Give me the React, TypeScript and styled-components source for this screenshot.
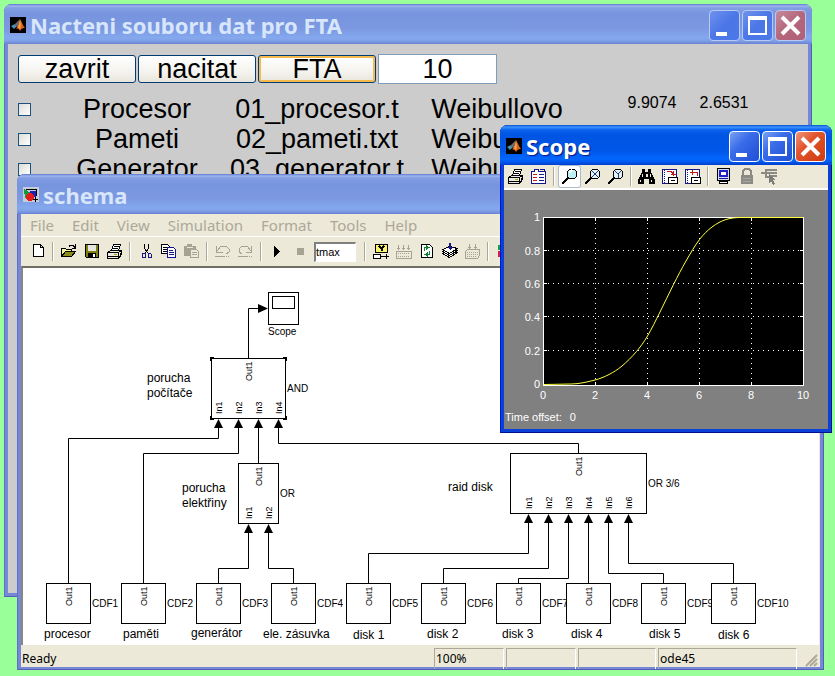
import React from "react";
import styled, { createGlobalStyle, css } from "styled-components";

const GlobalStyle = createGlobalStyle`
  *, *::before, *::after { box-sizing: border-box; }
  body { margin: 0; }
`;

const uiFont = `"Noto Sans", Tahoma, sans-serif`;
const plainFont = `"Liberation Sans", Arial, sans-serif`;

/* ---------- desktop and window frames ---------- */

const Desktop = styled.main`
  position: relative;
  height: 100vh;
  overflow: hidden;
  background: #99ff99;
  font-family: ${plainFont};
  color: #000;
`;

const Frame = styled.section<{ $active?: boolean }>`
  position: absolute;
  display: flex;
  flex-direction: column;
  overflow: hidden;
  border-radius: 8px 8px 0 0;
  padding: 0 4px 4px;
  background: ${(p) => (p.$active ? "#0a3fd8" : "#7687d8")};
  box-shadow: inset 1px 0 ${(p) => (p.$active ? "#0019cf" : "#5f6fc6")},
    inset -1px -1px ${(p) => (p.$active ? "#00138c" : "#5560b4")};
`;

const FtaFrame = styled(Frame)`
  inset: 4px 23px 79px 4px;
`;
const SchemaFrame = styled(Frame)`
  inset: 174px 11px 6px 17px;
  padding-bottom: 3px;
`;
const ScopeFrame = styled(Frame)`
  top: 125px;
  right: 3px;
  width: 332px;
`;

const TitleBar = styled.header<{ $active?: boolean }>`
  flex: none;
  display: flex;
  align-items: center;
  gap: 4px;
  height: 40px;
  margin: 0 -4px;
  padding: 2px 6px 0;
  background: ${(p) =>
    p.$active
      ? "linear-gradient(#0a4fc8 0, #3b92ff 2px, #0a62ee 5px, #0054e3 10px, #0057e8 26px, #0367ff 34px, #0258ee 37px, #003dcc 40px)"
      : "linear-gradient(#5e77c8 0, #9db5f0 2px, #829de4 4px, #7794de 10px, #7b98e1 24px, #84a8ee 34px, #7f9fe6 37px, #6a80d2 40px)"};
`;

const TitleText = styled.h1<{ $active?: boolean }>`
  flex: 1;
  margin: 0;
  overflow: hidden;
  white-space: nowrap;
  font: 700 22px/26px ${uiFont};
  color: ${(p) => (p.$active ? "#fff" : "#d8e6fb")};
  ${(p) => p.$active && css`text-shadow: 1px 1px 1px #0a1883;`}
`;

const CaptionGroup = styled.div`
  display: flex;
  gap: 2px;
`;

const CaptionButton = styled.button<{ $close?: boolean; $active?: boolean }>`
  width: 31px;
  height: 31px;
  padding: 0;
  border: 1px solid ${(p) => (p.$active ? "#fff" : "#b9cbf5")};
  border-radius: 4px;
  background: ${(p) =>
    p.$close
      ? p.$active
        ? "linear-gradient(135deg, #f0957a, #e2542c 40%, #cc3a10)"
        : "linear-gradient(135deg, #c58a9c, #b4667a 50%, #b06078)"
      : p.$active
        ? "linear-gradient(135deg, #7aa2f6, #3a6be8 40%, #1f4fd4)"
        : "linear-gradient(135deg, #6f92ee, #4b76e6 50%, #4c78ea)"};
  svg { display: block; }
`;

function Captions({ active }: { active?: boolean }) {
  return (
    <CaptionGroup>
      <CaptionButton $active={active} aria-label="Minimize">
        <svg width="29" height="29"><path d="M6 21h11v4H6z" fill="#fff" /></svg>
      </CaptionButton>
      <CaptionButton $active={active} aria-label="Maximize">
        <svg width="29" height="29"><path fillRule="evenodd" d="M5 5h19v19H5zM7 9v13h15V9z" fill="#fff" /></svg>
      </CaptionButton>
      <CaptionButton $active={active} $close aria-label="Close">
        <svg width="29" height="29"><path d="M6 6L23 23M23 6L6 23" stroke="#fff" strokeWidth="4" /></svg>
      </CaptionButton>
    </CaptionGroup>
  );
}

function MatlabIcon() {
  return (
    <svg width="16" height="16" viewBox="0 0 16 16">
      <path d="M0 0h16v16H0z" fill="#000" />
      <path d="M1 9l4-2 2 2-3 3z" fill="#4c8fb0" />
      <path d="M5 7l4-4 1-1-2 8-2-1z" fill="#6a6a78" />
      <path d="M10 2c2 3 3 7 5 9-2 0-3 0-5 3-1-2-2-3-4-2 2-3 3-6 4-10z" fill="#e0621c" />
      <path d="M10 3c1 3 1 6 0 9-1-1-1-1-2-1z" fill="#f6a648" />
    </svg>
  );
}

function ModelIcon() {
  return (
    <svg width="16" height="16" viewBox="0 0 16 16" shapeRendering="crispEdges">
      <path d="M0 0h16v15H0z" fill="#c4ccdc" />
      <path d="M2.500 2.500h11v6" fill="none" stroke="#000" />
      <path d="M1 2l7 4-6 5z" fill="#129a3c" />
      <path d="M7 4h6v6H7z" fill="#2020b0" />
      <circle cx="7" cy="10" r="4" fill="#e01c1c" />
      <path d="M10 12.500h5M12.500 10v5" stroke="#000" />
    </svg>
  );
}

/* ---------- FTA window ---------- */

const FtaBody = styled.div`
  flex: 1;
  overflow: hidden;
  padding: 10px;
  background: #ccc;
  font-size: 27px;
  line-height: 30px;
`;

const ButtonRow = styled.div`
  display: flex;
  align-items: center;
  gap: 2px;
  height: 30px;
  margin-bottom: 10px;
`;

const PushButton = styled.button<{ $focus?: boolean }>`
  width: 118px;
  height: 28px;
  padding: 0;
  border: 1px solid #003c74;
  border-radius: 3px;
  background: linear-gradient(#fff, #f4f3ee 60%, #e8e5dc);
  font: 27px/26px ${plainFont};
  color: #000;
  ${(p) => p.$focus && css`box-shadow: inset 0 0 0 2px #f5b94c;`}
`;

const HorizonInput = styled.input`
  width: 119px;
  height: 30px;
  padding: 0;
  border: 1px solid #7f9db9;
  background: #fff;
  font: 27px/28px ${plainFont};
  text-align: center;
  color: #000;
`;

const PartRow = styled.div`
  display: grid;
  grid-template-columns: 29px repeat(3, 180px) auto;
  align-items: center;
  justify-content: start;
  height: 30px;
  text-align: center;
  white-space: nowrap;
`;

const Tick = styled.input`
  appearance: none;
  width: 13px;
  height: 13px;
  margin: 0;
  border: 1px solid #1c5180;
  background: linear-gradient(135deg, #dcdcd7, #fff);
`;

const Params = styled.div`
  display: flex;
  align-self: start;
  padding-left: 29px;
  font-size: 16px;
  line-height: 18px;
`;

const Param = styled.span`
  width: 72px;
`;

const parts = [
  { name: "Procesor", file: "01_procesor.t", dist: "Weibullovo", params: ["9.9074", "2.6531"] },
  { name: "Pameti", file: "02_pameti.txt", dist: "Weibullovo", params: [] },
  { name: "Generator", file: "03_generator.t", dist: "Weibullovo", params: [] },
];

function FtaWindow() {
  return (
    <FtaFrame>
      <TitleBar>
        <MatlabIcon />
        <TitleText>Nacteni souboru dat pro FTA</TitleText>
        <Captions />
      </TitleBar>
      <FtaBody>
        <ButtonRow>
          <PushButton>zavrit</PushButton>
          <PushButton>nacitat</PushButton>
          <PushButton $focus>FTA</PushButton>
          <HorizonInput aria-label="tmax" defaultValue="10" />
        </ButtonRow>
        {parts.map((p) => (
          <PartRow key={p.name}>
            <Tick type="checkbox" id={p.name} />
            <label htmlFor={p.name}>{p.name}</label>
            <span>{p.file}</span>
            <span>{p.dist}</span>
            <Params>
              {p.params.map((v) => <Param key={v}>{v}</Param>)}
            </Params>
          </PartRow>
        ))}
      </FtaBody>
    </FtaFrame>
  );
}

/* ---------- toolbars ---------- */

const ToolBar = styled.div<{ $tall?: boolean }>`
  flex: none;
  display: flex;
  align-items: center;
  height: ${(p) => (p.$tall ? 29 : 23)}px;
  padding-left: ${(p) => (p.$tall ? 5 : 0)}px;
  overflow: hidden;
  background: #ece9d8;
`;

const ToolButton = styled.button<{ $on?: boolean }>`
  flex: none;
  width: 23px;
  height: 23px;
  padding: 0 3px;
  border: 0;
  border-radius: 3px;
  background: ${(p) => (p.$on ? "#fff" : "transparent")};
  ${(p) => p.$on && css`box-shadow: inset 0 0 0 1px #a9bccb;`}
  svg { display: block; }
`;

const Divider = styled.span`
  flex: none;
  width: 2px;
  height: 19px;
  margin: 0 3px;
  border-left: 1px solid #aca899;
  border-right: 1px solid #fff;
`;

const StopTime = styled.input`
  flex: none;
  width: 42px;
  height: 20px;
  margin: 0 5px 0 3px;
  padding: 0;
  border: 1px solid #fff;
  border-top: 2px solid #808080;
  border-left: 2px solid #808080;
  background: #fff;
  font: 11px/16px ${plainFont};
  color: #000;
`;

const k = "#000";
const g = "#a6a394";
const navy = "#16168c";

const icons: Record<string, React.ReactNode> = {
  New: <path d="M4.500 1.500h7l3 3v9h-10zM11.500 1.500v3h3" fill="#fff" stroke={k} />,
  Open: (
    <>
      <path d="M1.500 13.500v-8h4l1 1h5v3" fill="#f7f39a" stroke={k} />
      <path d="M1.500 13.500l4-5h10l-4 5z" fill="#8c8c1c" stroke={k} />
      <path d="M9 3.500l1-1h3l2 2M15.500 1v4h-4" fill="none" stroke={k} />
    </>
  ),
  Save: (
    <>
      <path d="M2.500 1.500h13v13h-12l-1-1z" fill="#7e7e12" stroke={k} />
      <path d="M5 2h8v6H5z" fill="#e6e6e0" />
      <path d="M5 10h8v4H5z" fill={k} />
      <path d="M10 11h2v3h-2z" fill="#fff" />
    </>
  ),
  Print: (
    <>
      <path d="M5.500 7.500l2-6h7l-2 6z" fill="#fff" stroke={k} />
      <path d="M8 3.500h5M7 5.500h5" stroke={k} />
      <path d="M1.500 9.500l3-2h11v4l-3 3.500h-11z" fill="#e8e8e0" stroke={k} />
      <path d="M1.500 9.500h11l3-2M12.500 9.500v5.500M2 13.500h10M14 9.500v4" fill="none" stroke={k} />
      <path d="M8 11.500h3" stroke="#b0a000" />
    </>
  ),
  Cut: (
    <>
      <path d="M7.500 1v4l3 5M11.500 1v4l-3 5" fill="none" stroke={k} />
      <path d="M6 10h2v4H5v-3zM11 10h2l1 1v3h-3z" fill="none" stroke={navy} />
    </>
  ),
  Copy: (
    <>
      <path d="M1.500 1.500h6l2 2v7h-8z" fill="#fff" stroke={k} />
      <path d="M3 4.500h4M3 6.500h5M3 8.500h5" stroke={k} />
      <path d="M7.500 4.500h6l2 2v8h-8z" fill="#fff" stroke={navy} />
      <path d="M9 7.500h4M9 9.500h5M9 11.500h5" stroke={navy} />
    </>
  ),
  Paste: (
    <>
      <path d="M1 3h3V1h5v2h4v10H1z" fill={g} />
      <path d="M4 4h6" stroke="#ece9d8" />
      <path d="M7.500 6.500h6l2 2v6h-8z" fill="#ece9d8" stroke={g} />
      <path d="M9 9.500h5M9 11.500h5" stroke={g} />
    </>
  ),
  Undo: <path d="M2.500 3v6h6M3 8l4-5h5l3 3v3l-3 2M1 13.500h10M12 13.500h1M14 13.500h1" fill="none" stroke={g} />,
  Redo: <path d="M14.500 3v6h-6M14 8l-4-5H5L2 6v3l3 2M1 13.500h10M12 13.500h1M14 13.500h1" fill="none" stroke={g} />,
  Start: <path d="M6 3h1l5 5.500L7 14H6z" fill={k} />,
  Stop: <path d="M6 5h7v7H6z" fill={g} />,
  "Library browser": (
    <>
      <path d="M3.500 1.500h12v8h-12z" fill="#fbf36a" stroke={k} />
      <path d="M7 3l2.500 2.500L12 3M9.500 5v3" fill="none" stroke={k} strokeWidth="2" />
      <path d="M1.500 11.500h7v4h-7z" fill="#fff" stroke={k} />
      <path d="M9 13.500h8M14.500 11v5" stroke={k} />
    </>
  ),
  "Build subsystem": (
    <>
      <path d="M3.500 2v5M8.500 2v5M13.500 2v5M2 5.500h3M7 5.500h3M12 5.500h3" stroke={g} />
      <path d="M1.500 8.500h15v7h-15z" fill="none" stroke={g} />
      <path d="M3 10.500h12M3 13h12" stroke={g} strokeDasharray="1 1" />
    </>
  ),
  Refresh: (
    <>
      <path d="M3.500 1.500h8l3 3v10h-11z" fill="#fff" stroke={k} />
      <path d="M6.500 8V4.500H9" fill="none" stroke="#12802c" />
      <path d="M8 2l4 2.500L8 7z" fill="#12802c" />
      <path d="M11.500 8v3.500H9" fill="none" stroke="#12802c" />
      <path d="M10 9l-4 2.500 4 2.500z" fill="#12802c" />
    </>
  ),
  "Update diagram": (
    <>
      <path d="M1.500 10.500l7-3 8 2-8 5z" fill="#fff" stroke={k} />
      <path d="M1.500 8.500l7-3 8 2-8 5z" fill="#fff" stroke={k} />
      <path d="M1.500 6.500l7-3 8 2-8 5z" fill="#fff" stroke={k} />
      <path d="M8 0h2v4h2L9 7 6 4h2z" fill={navy} />
    </>
  ),
  "Build model": (
    <>
      <path d="M5.500 1v5M11.500 1v5M4 4.500h3M10 4.500h3" stroke={g} />
      <path d="M1.500 8.500l2-2h12v6l-2 3h-12z" fill="none" stroke={g} />
      <path d="M3 9.500h11M3 11.500h11M3 13.500h10" stroke={g} strokeDasharray="1 1" />
    </>
  ),
  Debug: (
    <>
      <path d="M3 2h4v5H3z" fill="#12a03c" />
      <path d="M3 8h5v6H3z" fill="#d81c4c" />
    </>
  ),
  Parameters: (
    <>
      <path d="M1.500 3.500h3v-2h4v2h7v12h-14z" fill="#fff" stroke={navy} />
      <path d="M9.500 1.500h5v2" fill="none" stroke={navy} />
      <path d="M3 6.500h4M3 9.500h4M3 12.500h4" stroke="#d01818" />
      <path d="M9 6.500h5M9 9.500h5M9 12.500h5" stroke={navy} />
    </>
  ),
  Zoom: (
    <>
      <circle cx="11" cy="6" r="5" fill="#bdf0f4" stroke={k} />
      <path d="M8 5l3-3" stroke="#fff" strokeWidth="2" />
      <path d="M7 10L1 16" stroke={k} strokeWidth="2" />
    </>
  ),
  "Zoom X-axis": (
    <>
      <circle cx="11" cy="6" r="5" fill="#e2f1f4" stroke={k} />
      <path d="M8 3l6 6M14 3L8 9" stroke="#1c3a7c" />
      <path d="M7 10L1 16" stroke={k} strokeWidth="2" />
    </>
  ),
  "Zoom Y-axis": (
    <>
      <circle cx="11" cy="6" r="5" fill="#e2f1f4" stroke={k} />
      <path d="M8 3l3 3 3-3M11 6v4" fill="none" stroke="#1c3a7c" />
      <path d="M7 10L1 16" stroke={k} strokeWidth="2" />
    </>
  ),
  Autoscale: (
    <>
      <path d="M4 1h3v3h3V1h3v3l4 8v4h-6v-5H6v5H0v-4l4-8z" fill={k} />
      <path d="M4.500 6v3M12.500 6v3M2.500 12v2M13.500 12v2M8 6h1v2H8z" stroke="#ece9d8" fill="#ece9d8" />
    </>
  ),
  "Save axes settings": (
    <>
      <path d="M1.500 1.500h14v14h-14z" fill="#fff" stroke={navy} />
      <path d="M3.500 2v13" stroke={navy} strokeDasharray="1 1" />
      <path d="M6 3.500h4l2 2M12.500 3v5M10 6.500h5" fill="none" stroke="#c01818" />
      <path d="M7.500 9.500h9v6h-9z" fill="#fff" stroke={k} />
      <path d="M10 12.500h4" stroke={k} />
    </>
  ),
  "Restore axes settings": (
    <>
      <path d="M1.500 1.500h14v14h-14z" fill="#fff" stroke={navy} />
      <path d="M3.500 2v13" stroke={navy} strokeDasharray="1 1" />
      <path d="M13.500 8V4.500H7M8.500 2v5M6.500 4v1" fill="none" stroke="#c01818" />
      <path d="M7.500 9.500h9v6h-9z" fill="#fff" stroke={k} />
      <path d="M10 12.500h4" stroke={k} />
    </>
  ),
  "Floating scope": (
    <>
      <path d="M2.500 .500h12v12h-12z" fill="#d9dcf2" stroke={k} />
      <path d="M5 3h7v5H5z" fill="#fff" stroke="#2020c8" strokeWidth="2" />
      <path d="M4 10.500h9" stroke={navy} />
      <path d="M4.500 13.500h8v2h-8z" fill="#fff" stroke={k} />
    </>
  ),
  "Lock axes": (
    <>
      <path d="M5 8V3l2-2h4l2 2v5" fill="none" stroke="#8c8a84" strokeWidth="2" />
      <path d="M3 7h12v9H3z" fill="#8c8a84" />
      <path d="M5 10.500h8M5 13.500h8" stroke="#aaa79c" />
    </>
  ),
  "Signal selection": (
    <>
      <path d="M0 5h16M5 2h11M5 1v8h3M8 8h8" fill="none" stroke="#8c8a84" strokeWidth="2" />
      <path d="M8 6v9l2-2 2 4 2-1-2-4h3z" fill="#7e7c76" />
    </>
  ),
};

function Tools({ names, on }: { names: string[]; on?: string }) {
  return (
    <>
      {names.map((n, i) =>
        n === "|" ? (
          <Divider key={i} />
        ) : (
          <ToolButton key={i} $on={n === on} aria-label={n}>
            <svg width="17" height="17" viewBox="0 0 17 17" shapeRendering="crispEdges" fill="none">
              {icons[n]}
            </svg>
          </ToolButton>
        )
      )}
    </>
  );
}

/* ---------- schema window ---------- */

const MenuBar = styled.nav`
  flex: none;
  display: flex;
  gap: 18px;
  height: 23px;
  padding-left: 9px;
  border-bottom: 1px solid #fff;
  background: #ece9d8;
`;

const MenuItem = styled.button`
  padding: 0;
  border: 0;
  background: none;
  font: 15px/20px ${uiFont};
  color: #aca899;
`;

const Canvas = styled.div`
  flex: 1;
  overflow: hidden;
  border: solid #716f64;
  border-width: 2px 1px 0 2px;
  border-right-color: #ece9d8;
  border-left-color: #8a887c;
  background: #fff;
  svg { display: block; }
`;

const StatusBar = styled.footer`
  flex: none;
  display: grid;
  grid-template-columns: 1fr 70px 70px 78px 139px 21px;
  column-gap: 2px;
  height: 22px;
  padding-top: 3px;
  background: #ece9d8;
  font: 12px/20px ${uiFont};
`;

const StatusCell = styled.span<{ $flat?: boolean }>`
  padding-left: 1px;
  border: 1px solid ${(p) => (p.$flat ? "transparent" : "#fff")};
  border-top-color: ${(p) => (p.$flat ? "transparent" : "#aca899")};
  border-left: ${(p) => (p.$flat ? "0" : "1px solid #aca899")};
  border-bottom: 0;
`;

const Caption = styled.text`
  font: 12px ${plainFont};
`;
const BlockName = styled.text`
  font: 10px ${plainFont};
`;
const Port = styled.text`
  font: 9px ${plainFont};
`;

function PortLabel({ x, y, children }: { x: number; y: number; children: string }) {
  return <Port transform={`translate(${x + 3} ${y}) rotate(-90)`}>{children}</Port>;
}

function Block(p: { x: number; y: number; w: number; h: number; name: string; out: number; ins?: number[] }) {
  return (
    <g>
      <rect x={p.x + 0.5} y={p.y + 0.5} width={p.w} height={p.h} fill="#fff" stroke="#000" />
      <PortLabel x={p.out} y={p.y + 23}>Out1</PortLabel>
      {(p.ins || []).map((x, i) => (
        <PortLabel key={x} x={x} y={p.y + p.h - 4}>{`In${i + 1}`}</PortLabel>
      ))}
      <BlockName x={p.x + p.w + 2} y={p.y + p.h / 2 + 4}>{p.name}</BlockName>
    </g>
  );
}

const sources = [46, 121, 196, 271, 346, 421, 496, 566, 641, 711];

const captions: [number, number, string][] = [
  [147, 382, "porucha"], [147, 397, "počítače"],
  [182, 492, "porucha"], [182, 507, "elektřiny"],
  [448, 491, "raid disk"],
  [44, 638, "procesor"], [123, 638, "paměti"], [191, 637, "generátor"], [263, 638, "ele. zásuvka"],
  [353, 639, "disk 1"], [427, 638, "disk 2"], [502, 638, "disk 3"],
  [571, 638, "disk 4"], [649, 638, "disk 5"], [718, 639, "disk 6"],
];

const wires = [
  "M68.500 583V438.500H218.500V420", "M143.500 583V453.500H238.500V420",
  "M258.500 463V420", "M578.500 453V443.500H278.500V420",
  "M218.500 583V568.500H248.500V525", "M293.500 583V568.500H268.500V525",
  "M368.500 583V553.500H528.500V515", "M443.500 583V568.500H548.500V515",
  "M518.500 583V578.500H568.500V515", "M588.500 583V515",
  "M663.500 583V573.500H608.500V515", "M733.500 583V563.500H628.500V515",
  "M248.500 358V308.500H260",
];

const arrows: [number, number][] = [
  [218, 419], [238, 419], [258, 419], [278, 419],
  [248, 524], [268, 524],
  [528, 514], [548, 514], [568, 514], [588, 514], [608, 514], [628, 514],
];

function Diagram() {
  return (
    <svg width="796" height="377" viewBox="23 268 796 377" role="img" aria-label="Fault tree model">
      <path d={wires.join("")} fill="none" stroke="#000" />
      {sources.map((x, i) => (
        <Block key={x} x={x} y={583} w={44} h={40} name={`CDF${i + 1}`} out={x + 23} />
      ))}
      <Block x={211} y={358} w={74} h={60} name="AND" out={249} ins={[219, 239, 259, 279]} />
      <Block x={238} y={463} w={40} h={60} name="OR" out={259} ins={[249, 269]} />
      <Block x={510} y={453} w={136} h={60} name="OR 3/6" out={579} ins={[529, 549, 569, 589, 609, 629]} />
      {[211, 284].map((x) =>
        [358, 417].map((y) => (
          <g key={`${x}-${y}`}>
            <rect x={x - 1} y={y - 1} width="4" height="4" />
            <rect x={x === 211 ? x + 1 : x - 1} y={y === 358 ? y + 1 : y - 1} width="2" height="2" fill="#fff" />
          </g>
        ))
      )}
      {arrows.map(([x, y]) => (
        <path key={`${x}-${y}`} d={`M${x + 0.5} ${y}l4.500 9h-9z`} />
      ))}
      <path d="M268 308.500l-10 -4.500v9z" />
      <rect x="268.500" y="292.500" width="30" height="32" fill="#fff" stroke="#000" />
      <rect x="272.500" y="296.500" width="22" height="12" fill="#fff" stroke="#000" />
      <BlockName x="268" y="335">Scope</BlockName>
      {captions.map(([x, y, t]) => (
        <Caption key={`${x}-${y}`} x={x} y={y}>{t}</Caption>
      ))}
    </svg>
  );
}

const menus = ["File", "Edit", "View", "Simulation", "Format", "Tools", "Help"];

function SchemaWindow() {
  return (
    <SchemaFrame>
      <TitleBar>
        <ModelIcon />
        <TitleText>schema</TitleText>
        <Captions />
      </TitleBar>
      <MenuBar>
        {menus.map((m) => <MenuItem key={m}>{m}</MenuItem>)}
      </MenuBar>
      <ToolBar $tall>
        <Tools names={["New", "|", "Open", "Save", "Print", "|", "Cut", "Copy", "Paste", "|", "Undo", "Redo", "|", "Start", "Stop"]} />
        <StopTime aria-label="Simulation stop time" defaultValue="tmax" />
        <Tools names={["|", "Library browser", "Build subsystem", "Refresh", "Update diagram", "Build model", "|", "Debug"]} />
      </ToolBar>
      <Canvas><Diagram /></Canvas>
      <StatusBar>
        <StatusCell $flat>Ready</StatusCell>
        <StatusCell>100%</StatusCell>
        <StatusCell />
        <StatusCell />
        <StatusCell>ode45</StatusCell>
        <svg width="20" height="19">
          <path d="M7 18L18 7M11 18l7-7M15 18l3-3" stroke="#aca899" strokeWidth="2" />
        </svg>
      </StatusBar>
    </SchemaFrame>
  );
}

/* ---------- scope window ---------- */

const ScopeBody = styled.div`
  border-top: 2px solid #fff;
  background: #808080;
  color: #fff;
  font-size: 11px;
  svg { display: block; }
`;

const TickText = styled.text`
  font: 11px ${plainFont};
  fill: #fff;
`;

const TimeOffset = styled.p`
  display: flex;
  gap: 8px;
  margin: 0;
  padding: 7px 1px 5px;
  line-height: 13px;
`;

const samples: [number, number][] = [
  [543.5, 384.5], [571, 384], [595, 380], [609, 374.5], [622, 366], [636.5, 351.5],
  [647.5, 336], [660, 312], [673.5, 284.5], [686, 261], [699.5, 239.5],
  [712, 227], [726, 219.5], [742, 217.5], [803, 217.5],
];

/* Catmull-Rom spline through the samples. */
function smooth(p: [number, number][]) {
  let d = `M${p[0][0]} ${p[0][1]}`;
  for (let i = 0; i < p.length - 1; i++) {
    if (i === 0 || i === p.length - 2) {
      d += `L${p[i + 1][0]} ${p[i + 1][1]}`;
      continue;
    }
    const [a, b, c, e] = [p[i - 1], p[i], p[i + 1], p[i + 2]];
    const s = (c[0] - b[0]) / 3;
    const m1 = i === 1 ? 0 : (c[1] - a[1]) / (c[0] - a[0]);
    const m2 = i === p.length - 3 ? 0 : (e[1] - b[1]) / (e[0] - b[0]);
    d += `C${b[0] + s} ${b[1] + m1 * s} ${c[0] - s} ${c[1] - m2 * s} ${c[0]} ${c[1]}`;
  }
  return d;
}

const gridY = [251, 284, 317, 351];
const gridX = [595, 647, 699, 751];

function Plot() {
  return (
    <svg width="324" height="214" viewBox="504 190 324 214" role="img" aria-label="Simulation output over time">
      <rect x="543.500" y="217.500" width="260" height="168" fill="#000" stroke="#fff" />
      <g stroke="#fff" strokeDasharray="1 4" shapeRendering="crispEdges">
        {gridY.map((y) => <path key={y} d={`M543 ${y - 0.5}H804`} />)}
        {gridX.map((x) => <path key={x} d={`M${x + 0.5} 218V385`} />)}
      </g>
      <g stroke="#fff">
        {gridY.map((y) => <path key={y} d={`M544 ${y - 0.5}h3M800 ${y - 0.5}h3`} />)}
        {gridX.map((x) => <path key={x} d={`M${x + 0.5} 382v3M${x + 0.5} 218v3`} />)}
      </g>
      <path d={smooth(samples)} fill="none" stroke="#ffff40" />
      {[217, ...gridY, 384].map((y, i) => (
        <TickText key={y} x="540" y={y + 4} textAnchor="end">{["1", "0.8", "0.6", "0.4", "0.2", "0"][i]}</TickText>
      ))}
      {[543, ...gridX, 803].map((x, i) => (
        <TickText key={x} x={x} y="399" textAnchor="middle">{i * 2}</TickText>
      ))}
    </svg>
  );
}

function ScopeWindow() {
  return (
    <ScopeFrame $active>
      <TitleBar $active>
        <MatlabIcon />
        <TitleText $active>Scope</TitleText>
        <Captions active />
      </TitleBar>
      <ToolBar>
        <Tools
          on="Zoom"
          names={["Print", "Parameters", "|", "Zoom", "Zoom X-axis", "Zoom Y-axis", "|", "Autoscale", "Save axes settings", "Restore axes settings", "|", "Floating scope", "Lock axes", "Signal selection"]}
        />
      </ToolBar>
      <ScopeBody>
        <Plot />
        <TimeOffset><span>Time offset:</span><span>0</span></TimeOffset>
      </ScopeBody>
    </ScopeFrame>
  );
}

export default function App() {
  return (
    <>
      <GlobalStyle />
      <Desktop>
        <FtaWindow />
        <SchemaWindow />
        <ScopeWindow />
      </Desktop>
    </>
  );
}
